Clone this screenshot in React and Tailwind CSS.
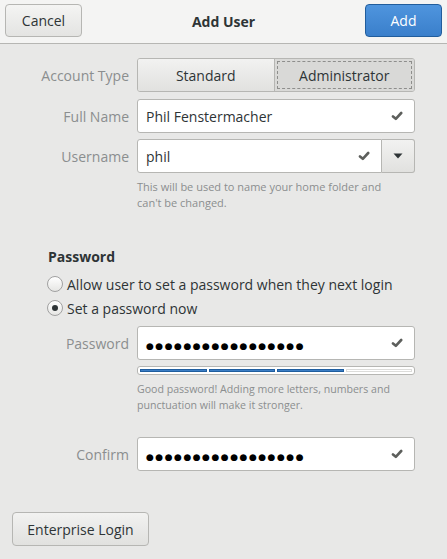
import React from 'react';

const FONT = { fontFamily: '"Open Sans", "Noto Sans", sans-serif' };

const Check = () => (
  <svg width="12" height="10" viewBox="0 0 12 10" className="shrink-0">
    <path d="M2 5.4 L4.8 7.8 L10.2 2" fill="none" stroke="#5d5f5c" strokeWidth="2.6" strokeLinecap="round" strokeLinejoin="round" />
  </svg>
);

const Dots = () => (
  <span className="text-[9px] tracking-[1.5px] text-black" style={{ fontFamily: '"DejaVu Sans", sans-serif' }}>
    {'●'.repeat(17)}
  </span>
);

const Entry = ({ children, className = '' }) => (
  <div className={`h-[34px] flex items-center bg-white border border-[#b6b6b3] rounded-[3px] pl-[8px] pr-[11px] ${className}`}>
    <div className="flex-1 text-[14px] text-[#2e3436]">{children}</div>
    <Check />
  </div>
);

const Label = ({ children }) => (
  <div className="w-[137px] pr-[8px] text-right text-[14px] text-[#8b8e8f] shrink-0">{children}</div>
);

const Radio = ({ checked }) => (
  <div className="w-[16px] h-[16px] rounded-full border border-[#a1a1a1] bg-gradient-to-b from-white to-[#e6e6e4] flex items-center justify-center shrink-0">
    {checked && <div className="w-[6px] h-[6px] rounded-full bg-[#2e3436]" />}
  </div>
);

export default function App() {
  return (
    <div className="w-[447px] h-[559px] bg-[#e8e8e7] flex flex-col overflow-hidden" style={FONT}>
      {/* Header */}
      <div className="h-[44px] bg-[#f4f4f3] border-b border-[#b6b6b3] flex items-start justify-between px-[5px] pt-[4px] relative">
        <button className="w-[77px] h-[33px] rounded-[4px] border border-[#b6b6b3] bg-gradient-to-b from-[#f4f4f3] to-[#e4e4e2] text-[14px] text-[#2e3436]">
          Cancel
        </button>
        <div className="absolute left-0 right-0 top-[11px] text-center text-[14px] font-bold text-[#2e3436] pointer-events-none">Add User</div>
        <button className="w-[77px] h-[33px] rounded-[4px] border border-[#215d9c] bg-gradient-to-b from-[#4f95de] to-[#3a7fcb] text-[14px] text-white">
          Add
        </button>
      </div>

      {/* Form */}
      <div className="flex flex-col">
        <div className="flex items-center mt-[14px]">
          <Label>Account Type</Label>
          <div className="w-[278px] h-[34px] flex rounded-[3px] border border-[#b6b6b3] overflow-hidden">
            <button className="flex-1 bg-gradient-to-b from-[#f2f2f1] to-[#e1e1df] border-r border-[#b6b6b3] text-[14px] text-[#2e3436]">
              Standard
            </button>
            <button className="flex-1 bg-[#d9d9d7] text-[14px] text-[#2e3436] p-[2px]">
              <div className="w-full h-full border border-dashed border-[#8e8e8c] flex items-center justify-center">Administrator</div>
            </button>
          </div>
        </div>

        <div className="flex items-center mt-[7px]">
          <Label>Full Name</Label>
          <Entry className="w-[278px]">Phil Fenstermacher</Entry>
        </div>

        <div className="flex items-center mt-[6px]">
          <Label>Username</Label>
          <div className="w-[278px] h-[34px] flex">
            <Entry className="flex-1 rounded-r-none">phil</Entry>
            <button className="w-[33px] h-[34px] border border-l-0 border-[#b6b6b3] rounded-r-[3px] bg-gradient-to-b from-[#f2f2f1] to-[#e1e1df] flex items-center justify-center">
              <svg width="10" height="6" viewBox="0 0 10 6"><path d="M0.5 0.5 L9.5 0.5 L5 5.5 Z" fill="#2e3436" /></svg>
            </button>
          </div>
        </div>

        <div className="ml-[137px] mt-[6px] text-[11px] leading-[16px] text-[#8b8e8f] whitespace-nowrap">
          This will be used to name your home folder and<br />can't be changed.
        </div>

        <div className="ml-[48px] mt-[36px] text-[14px] leading-[20px] font-bold text-[#2e3436]">Password</div>

        <div className="ml-[47px] mt-[5px] flex items-center gap-[4px] h-[24px] text-[14px] text-[#2e3436]">
          <Radio />
          <span>Allow user to set a password when they next login</span>
        </div>
        <div className="ml-[47px] flex items-center gap-[4px] h-[24px] text-[14px] text-[#2e3436]">
          <Radio checked />
          <span>Set a password now</span>
        </div>

        <div className="flex items-center mt-[6px]">
          <Label>Password</Label>
          <Entry className="w-[278px]"><Dots /></Entry>
        </div>

        <div className="ml-[137px] mt-[6px] w-[278px] h-[9px] rounded-[3px] border border-[#b6b6b3] bg-white flex gap-[2px] px-[2px] py-[2px]">
          <div className="flex-1 bg-[#3b7dc4] border border-[#1f5d9e]" />
          <div className="flex-1 bg-[#3b7dc4] border border-[#1f5d9e]" />
          <div className="flex-1 bg-[#3b7dc4] border border-[#1f5d9e]" />
          <div className="flex-1 bg-white border border-[#dcdcda]" />
        </div>

        <div className="ml-[137px] mt-[6px] text-[10.6px] leading-[16px] text-[#8b8e8f] whitespace-nowrap">
          Good password! Adding more letters, numbers and<br />punctuation will make it stronger.
        </div>

        <div className="flex items-center mt-[24px]">
          <Label>Confirm</Label>
          <Entry className="w-[278px]"><Dots /></Entry>
        </div>
      </div>

      <div className="mt-auto mb-[13px] ml-[12px]">
        <button className="w-[137px] h-[34px] rounded-[4px] border border-[#b6b6b3] bg-gradient-to-b from-[#f2f2f1] to-[#e1e1df] text-[14px] text-[#2e3436]">
          Enterprise Login
        </button>
      </div>
    </div>
  );
}
